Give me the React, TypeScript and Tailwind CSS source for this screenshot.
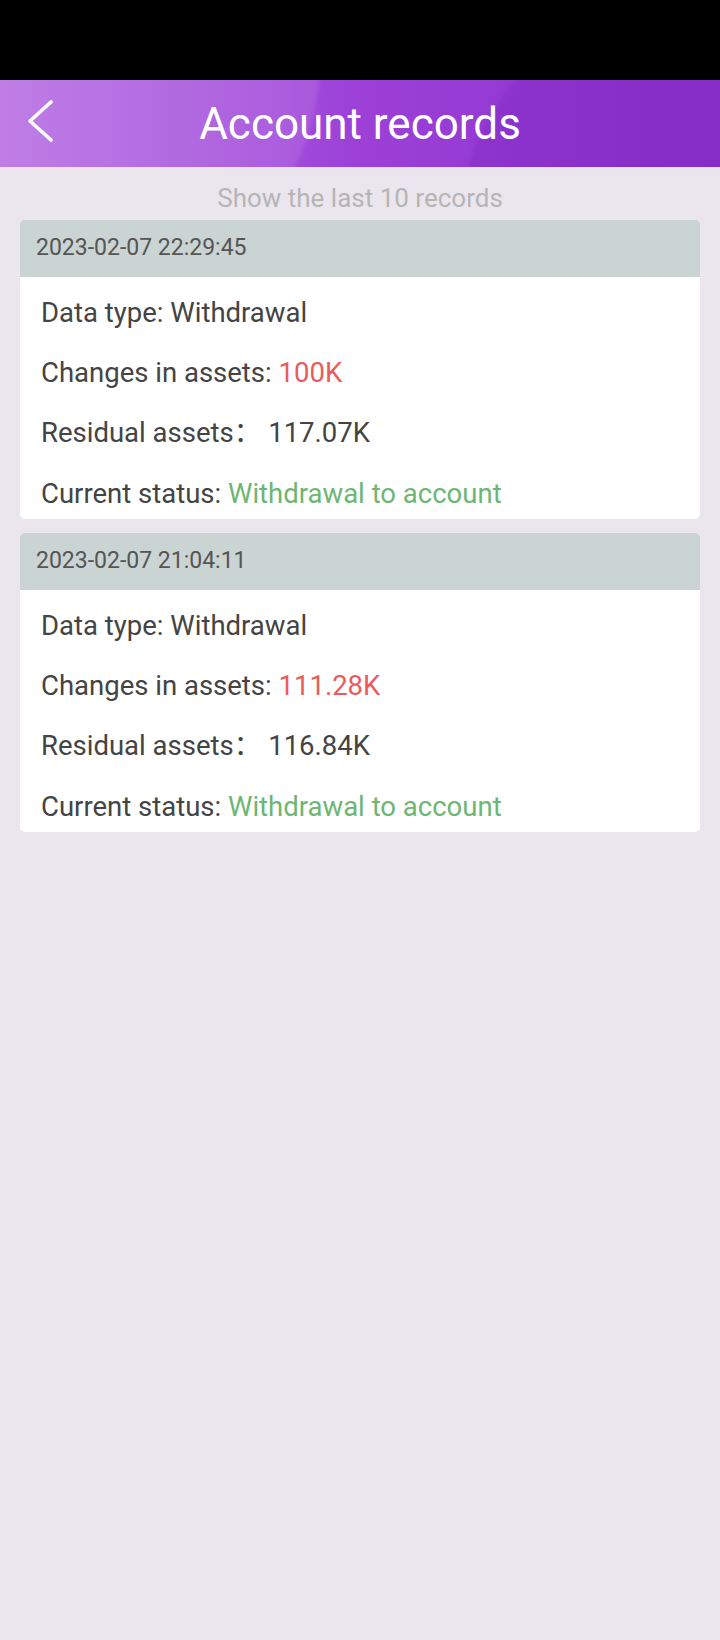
const records = [
  {
    time: "2023-02-07 22:29:45",
    type: "Withdrawal",
    change: "100K",
    residual: "117.07K",
    status: "Withdrawal to account",
  },
  {
    time: "2023-02-07 21:04:11",
    type: "Withdrawal",
    change: "111.28K",
    residual: "116.84K",
    status: "Withdrawal to account",
  },
];

function RecordCard({ record }: { record: (typeof records)[number] }) {
  return (
    <div className="mx-5 overflow-hidden rounded-[5px]">
      <div className="flex h-[57px] items-center bg-[#cad4d3] px-[16px] text-[23px] text-[#555]">
        {record.time}
      </div>
      <div className="flex flex-col bg-white px-[21px] pt-[6px] text-[27.5px] text-[#444]">
        <p className="h-[60px] leading-[60px]">Data type: {record.type}</p>
        <p className="h-[60px] leading-[60px]">
          Changes in assets: <span className="text-[#e85c5c]">{record.change}</span>
        </p>
        <p className="h-[60px] leading-[60px]">
          Residual assets
          <span className="mr-[7px] font-['Noto_Sans_CJK_SC',sans-serif] leading-none">：</span>
          {record.residual}
        </p>
        <p className="h-[56px] leading-[61px]">
          Current status: <span className="text-[#6db673]">{record.status}</span>
        </p>
      </div>
    </div>
  );
}

export default function App() {
  return (
    <div className="min-h-[1640px] bg-[#ebe6ee] font-['Roboto','Noto_Sans',sans-serif]">
      <div className="h-20 bg-black" />
      <header className="relative flex h-[87px] items-center justify-center overflow-hidden bg-gradient-to-r from-[#b86fe3] via-[#9c40d8] to-[#8a30c9]">
        <div className="absolute -left-[160px] -top-[260px] h-[480px] w-[480px] rounded-full bg-white/10 blur-[2px]" />
        <div className="absolute -right-[180px] -bottom-[280px] h-[440px] w-[440px] rounded-full bg-[#7a25c0]/30 blur-[2px]" />
        <button type="button" className="absolute left-[26px] top-[20px] text-white">
          <svg width="28" height="42" viewBox="0 0 28 42" fill="none">
            <polyline
              points="25,2 4,21 25,40"
              stroke="currentColor"
              strokeWidth="3.6"
              strokeLinecap="round"
              strokeLinejoin="round"
            />
          </svg>
        </button>
        <h1 className="relative text-[44px] text-white">Account records</h1>
      </header>
      <p className="pt-[16px] pb-[7px] text-center text-[26px] leading-[30px] text-[#b5b5b5]">
        Show the last 10 records
      </p>
      <div className="flex flex-col gap-[14px]">
        {records.map((r) => (
          <RecordCard key={r.time} record={r} />
        ))}
      </div>
    </div>
  );
}
